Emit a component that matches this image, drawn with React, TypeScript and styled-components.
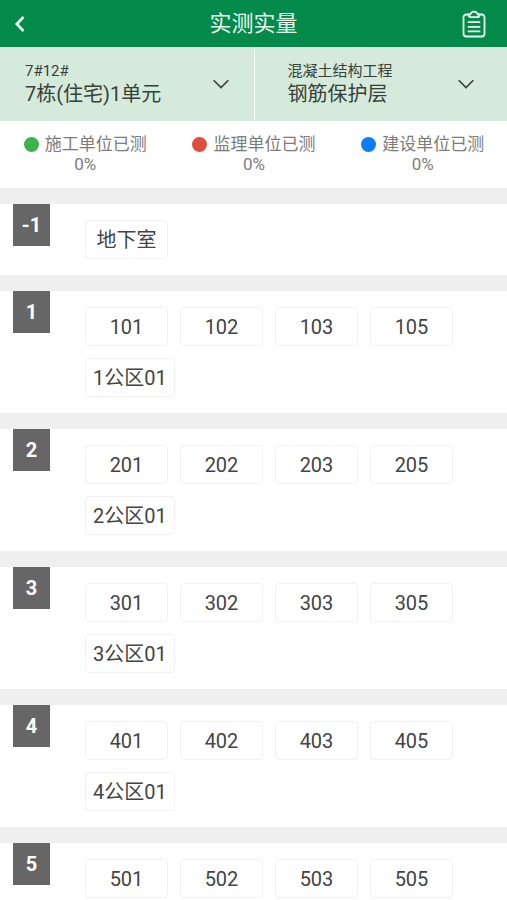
import React from "react";
import styled, { createGlobalStyle } from "styled-components";

const GlobalStyle = createGlobalStyle`
  *, *::before, *::after { box-sizing: border-box; }
  body {
    margin: 0;
    background: #ffffff;
    color: #444444;
    font-family: Roboto, "Noto Sans CJK SC", sans-serif;
  }
  button, select { font: inherit; color: inherit; }
`;

const Page = styled.div`
  display: flex;
  flex-direction: column;
  height: 100vh;
`;

const TopBar = styled.header`
  display: grid;
  grid-template-columns: 1fr auto 1fr;
  align-items: center;
  flex: none;
  height: 47px;
  padding: 0 20px 0 8px;
  background: #048a4b;
  color: #e9fbee;
`;

const Title = styled.h1`
  margin: 0;
  padding-left: 12px;
  font-size: 22px;
  line-height: 32px;
  font-weight: 400;
`;

const IconButton = styled.button<{ $end?: boolean }>`
  display: flex;
  justify-self: ${(p) => (p.$end ? "end" : "start")};
  padding: 0;
  border: 0;
  background: none;
  cursor: pointer;
`;

const Filters = styled.div`
  display: grid;
  grid-template-columns: 1fr 1fr;
  flex: none;
  background: #d5eada;
`;

const Filter = styled.label<{ $inset: number }>`
  display: grid;
  grid-template-columns: 1fr 16px;
  grid-template-rows: 20px 26px;
  align-items: center;
  padding: 14px ${(p) => p.$inset}px;
  color: #36413a;

  & + & { border-left: 1px solid #f4fbf5; }
`;

const FilterCaption = styled.span`
  grid-area: 1 / 1;
  font-size: 15px;
  line-height: 20px;
  white-space: nowrap;
`;

const FilterSelect = styled.select`
  grid-area: 2 / 1 / 3 / 3;
  width: 100%;
  height: 26px;
  padding: 0;
  border: 0;
  background: none;
  appearance: none;
  font-size: 20px;
  line-height: 26px;
  cursor: pointer;
`;

const FilterArrow = styled.svg`
  grid-area: 1 / 2 / 3 / 3;
  pointer-events: none;
`;

const Legend = styled.ul`
  display: grid;
  grid-template-columns: repeat(3, 1fr);
  flex: none;
  margin: 0;
  padding: 13px 0 14px 1px;
  list-style: none;
  color: #7c7c7c;
  font-size: 17px;
  line-height: 20px;
  text-align: center;
`;

const LegendLabel = styled.div`
  display: flex;
  align-items: center;
  justify-content: center;
  gap: 6px;
  white-space: nowrap;
`;

const Dot = styled.span<{ $color: string }>`
  width: 15px;
  height: 15px;
  border-radius: 50%;
  background: ${(p) => p.$color};
`;

const Floors = styled.main`
  flex: 1;
  min-height: 0;
  overflow-y: auto;
  scrollbar-width: none;
`;

const Floor = styled.section`
  display: flex;
  align-items: flex-start;
  gap: 35px;
  padding-left: 13px;
  border-top: 16px solid #efefef;
`;

const FloorBadge = styled.h2`
  flex: none;
  width: 37px;
  margin: 0;
  background: #666666;
  color: #ffffff;
  font-size: 20px;
  line-height: 42px;
  font-weight: 700;
  text-align: center;
`;

const Rooms = styled.div`
  display: flex;
  flex-wrap: wrap;
  flex: 1;
  gap: 12px;
  padding: 16px 0;
`;

const Room = styled.button`
  min-width: 83px;
  height: 39px;
  padding: 0 7px;
  border: 1px solid #f2f2f2;
  border-radius: 4px;
  background: #ffffff;
  font-size: 20px;
  line-height: 24px;
  white-space: nowrap;
  cursor: pointer;
`;

const filters = [
  { caption: "7#12#", value: "7栋(住宅)1单元", inset: 25 },
  { caption: "混凝土结构工程", value: "钢筋保护层", inset: 33 },
];

const progress = [
  { label: "施工单位已测", value: "0%", color: "#3bb54a" },
  { label: "监理单位已测", value: "0%", color: "#de4e3f" },
  { label: "建设单位已测", value: "0%", color: "#0a7df8" },
];

const floors = [
  { name: "-1", rooms: ["地下室"] },
  { name: "1", rooms: ["101", "102", "103", "105", "1公区01"] },
  { name: "2", rooms: ["201", "202", "203", "205", "2公区01"] },
  { name: "3", rooms: ["301", "302", "303", "305", "3公区01"] },
  { name: "4", rooms: ["401", "402", "403", "405", "4公区01"] },
  { name: "5", rooms: ["501", "502", "503", "505"] },
];

const BackIcon = () => (
  <svg width="24" height="24" viewBox="0 0 24 24" fill="none" stroke="currentColor" strokeWidth="2.6" aria-hidden="true">
    <path d="M15.5 5 8.800 12l6.700 7" />
  </svg>
);

const ClipboardIcon = () => (
  <svg width="26" height="28" viewBox="0 0 26 28" fill="none" stroke="currentColor" strokeWidth="1.8" strokeLinecap="round" strokeLinejoin="round" aria-hidden="true">
    <path d="M7.5 4.5H5.2a2.7 2.7 0 0 0-2.7 2.7v16.6a2.7 2.7 0 0 0 2.7 2.7h15.6a2.7 2.7 0 0 0 2.7-2.7V7.2a2.7 2.7 0 0 0-2.7-2.7h-2.3" />
    <path d="M7.5 4.5c0 1.800.8 2.700 2.200 2.700h6.600c1.400 0 2.200-.9 2.200-2.700h-1.700c-.6-1.800-1.900-2.900-3.800-2.900s-3.200 1.100-3.800 2.900z" />
    <path d="M7.500 12.200h11M7.500 16.800h11M7.500 21.400h11" />
  </svg>
);

export default function App() {
  return (
    <>
      <GlobalStyle />
      <Page>
        <TopBar>
          <IconButton type="button" aria-label="返回">
            <BackIcon />
          </IconButton>
          <Title>实测实量</Title>
          <IconButton type="button" aria-label="记录" $end>
            <ClipboardIcon />
          </IconButton>
        </TopBar>
        <Filters>
          {filters.map((f) => (
            <Filter key={f.caption} $inset={f.inset}>
              <FilterCaption>{f.caption}</FilterCaption>
              <FilterSelect defaultValue={f.value}>
                <option>{f.value}</option>
              </FilterSelect>
              <FilterArrow width="16" height="10" viewBox="0 0 16 10" fill="none" stroke="currentColor" strokeWidth="1.6" aria-hidden="true">
                <path d="M.7 1.200 8 8.500 15.300 1.200" />
              </FilterArrow>
            </Filter>
          ))}
        </Filters>
        <Legend>
          {progress.map((p) => (
            <li key={p.label}>
              <LegendLabel>
                <Dot $color={p.color} />
                {p.label}
              </LegendLabel>
              {p.value}
            </li>
          ))}
        </Legend>
        <Floors>
          {floors.map((floor) => (
            <Floor key={floor.name}>
              <FloorBadge>{floor.name}</FloorBadge>
              <Rooms>
                {floor.rooms.map((room) => (
                  <Room key={room} type="button">
                    {room}
                  </Room>
                ))}
              </Rooms>
            </Floor>
          ))}
        </Floors>
      </Page>
    </>
  );
}
